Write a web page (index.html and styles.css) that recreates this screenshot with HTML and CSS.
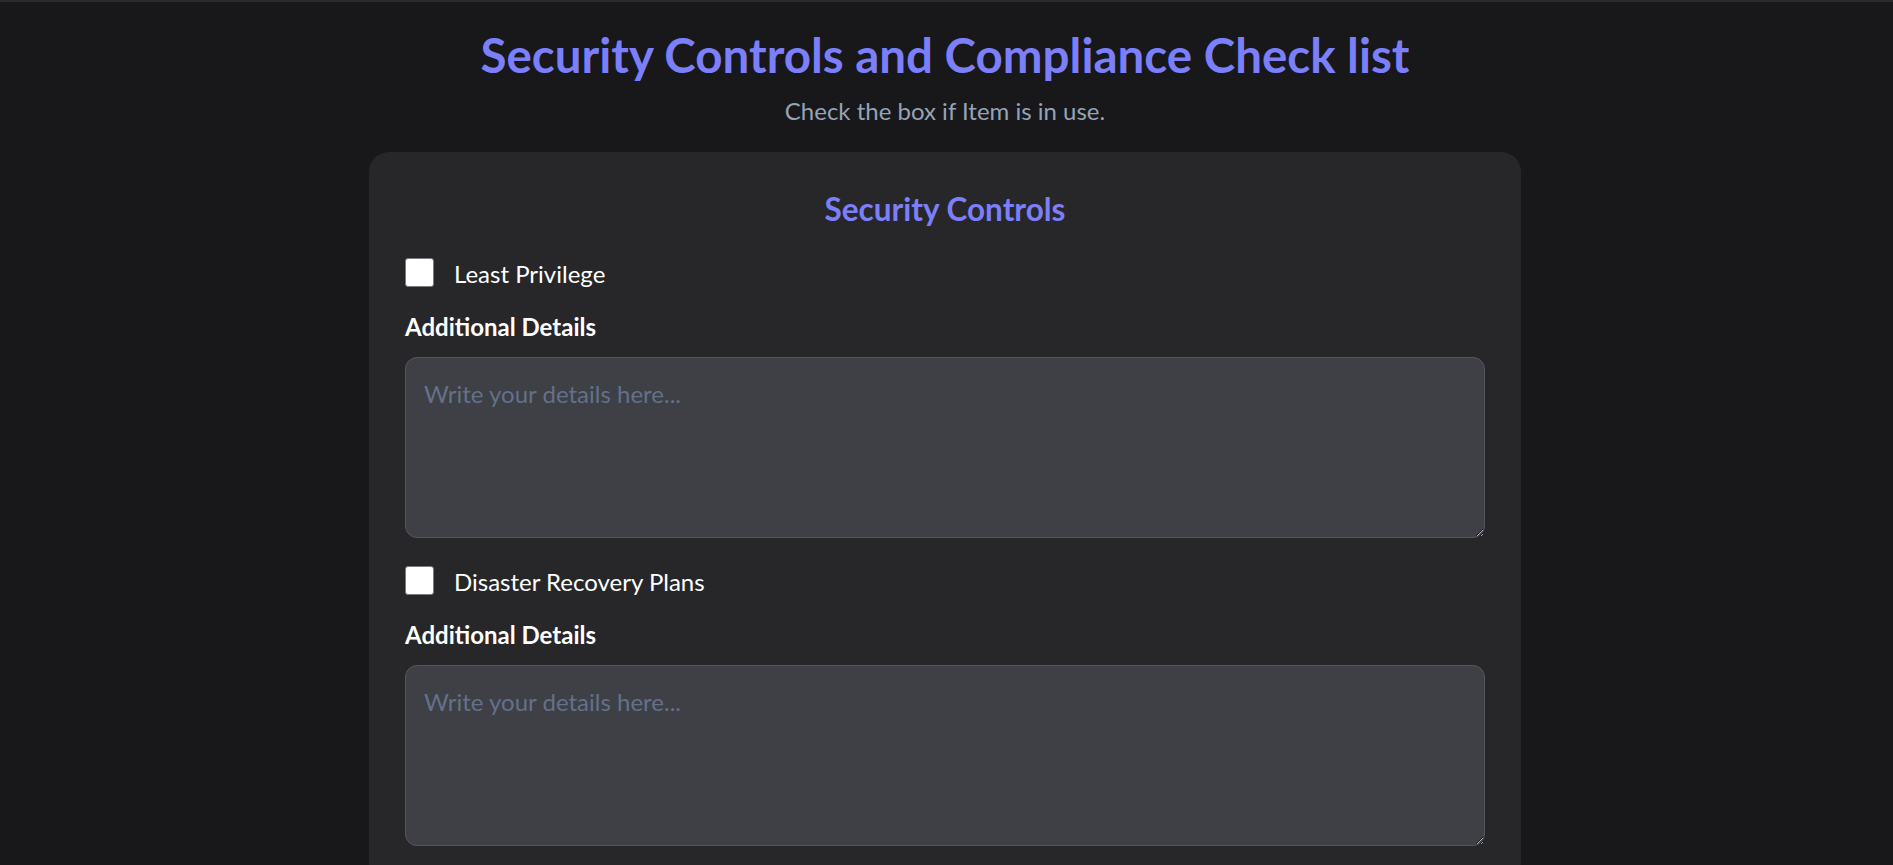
FILE: index.html
```html
<!DOCTYPE html>
<html lang="en">
<head>
<meta charset="utf-8">
<title>Security Controls and Compliance Check list</title>
<link rel="stylesheet" href="styles.css">
</head>
<body>
<div class="page">
  <header class="header">
    <h1 class="title">Security Controls and Compliance Check list</h1>
    <p class="subtitle">Check the box if Item is in use.</p>
  </header>
  <main class="card">
    <h2 class="section-title">Security Controls</h2>
    <div class="item">
      <label class="check-row">
        <input type="checkbox" class="check">
        <span class="check-label">Least Privilege</span>
      </label>
      <label class="details-label" for="d1">Additional Details</label>
      <textarea id="d1" class="details" placeholder="Write your details here..."></textarea>
    </div>
    <div class="item">
      <label class="check-row">
        <input type="checkbox" class="check">
        <span class="check-label">Disaster Recovery Plans</span>
      </label>
      <label class="details-label" for="d2">Additional Details</label>
      <textarea id="d2" class="details" placeholder="Write your details here..."></textarea>
    </div>
  </main>
</div>
</body>
</html>
```

FILE: styles.css
```css
html, body {
  margin: 0;
  padding: 0;
}
body {
  background: #18181b;
  border-top: 2px solid #2b2b2e;
  font-family: Lato, "Open Sans", sans-serif;
  color: #f4f4f5;
  overflow: hidden;
}
.page {
  padding: 26px 3px 0 0;
}
.header {
  text-align: center;
}
.title {
  margin: 0;
  font-size: 47.5px;
  line-height: 54px;
  font-weight: 700;
  color: #7b7ffa;
}
.subtitle {
  margin: 14px 0 0;
  font-size: 24px;
  line-height: 30px;
  color: #94a3b8;
}
.card {
  max-width: 1152px;
  margin: 26px auto 0;
  box-sizing: border-box;
  background: #27272a;
  border-radius: 20px;
  padding: 39px 36px 36px;
}
.section-title {
  margin: 0;
  text-align: center;
  font-size: 31.5px;
  line-height: 36px;
  font-weight: 700;
  color: #7b7ffa;
}
.item {
  display: flex;
  flex-direction: column;
}
.check-row {
  display: flex;
  align-items: center;
  gap: 20px;
  margin-top: 30px;
  cursor: pointer;
}
.check {
  appearance: none;
  -webkit-appearance: none;
  margin: 0;
  width: 29px;
  height: 29px;
  background: #ffffff;
  border: 1.5px solid #7a7a80;
  border-radius: 3px;
  box-sizing: border-box;
  flex: none;
}
.check-label {
  font-size: 24px;
  line-height: 27px;
  padding-top: 3px;
  color: #ffffff;
}
.details-label {
  margin-top: 26px;
  font-size: 24px;
  line-height: 27px;
  font-weight: 700;
  color: #ffffff;
}
.details {
  margin-top: 17px;
  box-sizing: border-box;
  width: 100%;
  height: 181px;
  background: #3f3f46;
  border: 1px solid #55555d;
  border-radius: 12px;
  padding: 22px 18px;
  font-family: inherit;
  font-size: 24px;
  line-height: 27px;
  color: #f4f4f5;
  resize: vertical;
  outline: none;
}
.details::placeholder {
  color: #63718a;
}
.item + .item .check-row {
  margin-top: 27px;
}
```
